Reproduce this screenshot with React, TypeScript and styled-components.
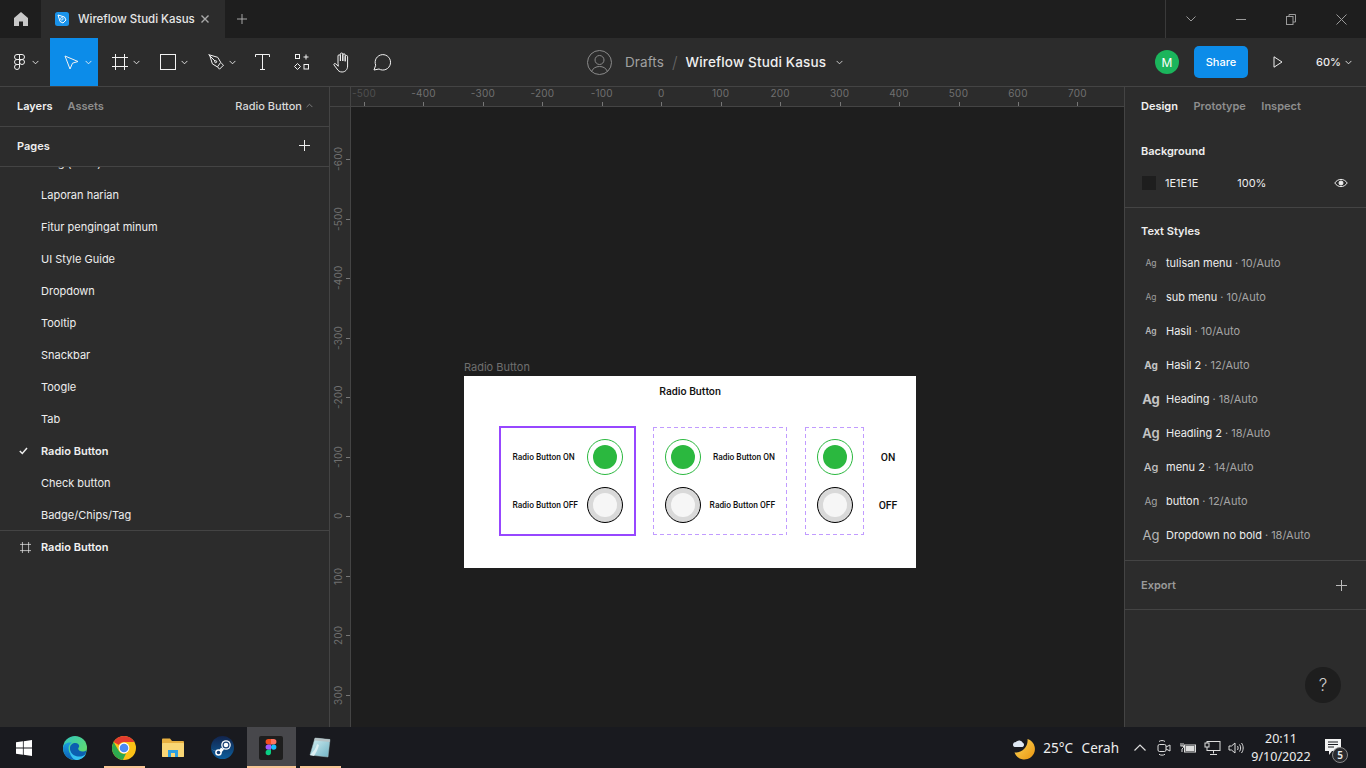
import React from "react";
import styled, { createGlobalStyle } from "styled-components";

const Global = createGlobalStyle`
  html, body { margin: 0; padding: 0; width: 100%; height: 100%; overflow: hidden; background: #1e1e1e; }
  #root { width: 1366px; height: 768px; }
  * { box-sizing: border-box; }
  body { font-family: Inter, "Liberation Sans", sans-serif; font-size: 11px; color: #fff; }
`;

const Page = styled.div`
  width: 1366px; height: 768px; display: flex; flex-direction: column; overflow: hidden;
`;

/* ---------- tab bar ---------- */
const TabBar = styled.header`
  height: 38px; flex: none; display: flex; align-items: stretch; background: #1e1e1e;
`;
const HomeTab = styled.div`
  width: 41px; display: flex; align-items: center; justify-content: center; color: #c8c8c8;
`;
const FileTab = styled.div`
  width: 184px; background: #2c2c2c; display: flex; align-items: center; padding-left: 14px; gap: 9px;
`;
const TabTitle = styled.span`
  font-size: 11.5px; font-weight: 500; color: #e6e6e6; white-space: nowrap; width: 114px; letter-spacing: -.02px;
`;
const NewTab = styled.div`
  width: 34px; display: flex; align-items: center; justify-content: center; color: #b3b3b3;
`;
const Spacer = styled.div`flex: 1;`;
const WindowControls = styled.div`
  width: 201px; border-left: 1px solid #3a3a3a; display: flex; color: #9a9a9a;
`;
const WindowButton = styled.div`
  width: 50px; display: flex; align-items: center; justify-content: center;
`;

/* ---------- toolbar ---------- */
const Toolbar = styled.div`
  height: 49px; flex: none; display: flex; align-items: stretch; background: #2c2c2c;
  border-bottom: 1px solid #444;
`;
const ToolGroup = styled.div<{ $w: number; $active?: boolean }>`
  width: ${p => p.$w}px; display: flex; align-items: center; justify-content: space-between; padding: 0 6px 0 14px;
  background: ${p => (p.$active ? "#0c8ce9" : "transparent")}; color: #f2f2f2;
`;
const MainMenu = styled(ToolGroup)`
  padding-right: 11px;
`;
const SingleTool = styled.div`
  width: 40px; display: flex; align-items: center; justify-content: center; color: #f2f2f2;
`;
const Breadcrumb = styled.div`
  margin-left: 185px; display: flex; align-items: center; font-size: 13.5px; white-space: nowrap;
`;
const Drafts = styled.span`color: #a0a0a0; margin-left: 13px; letter-spacing: .1px;`;
const Slash = styled.span`color: #666; margin: 0 8px 0 8px; font-weight: 300; font-size: 16px;`;
const FileName = styled.span`color: #f0f0f0; font-weight: 500; margin-right: 10px; letter-spacing: .16px;`;
const ToolbarRight = styled.div`
  margin-left: auto; display: flex; align-items: center;
`;
const Avatar = styled.div`
  width: 24px; height: 24px; border-radius: 50%; background: #1bb55c; color: #fff; font-size: 12px;
  display: flex; align-items: center; justify-content: center; margin-right: 15px;
`;
const ShareButton = styled.div`
  width: 54px; height: 32px; border-radius: 5px; background: #0c8ce9; color: #fff; font-size: 11px; font-weight: 500;
  display: flex; align-items: center; justify-content: center;
`;
const PlayBox = styled.div`
  width: 60px; display: flex; align-items: center; justify-content: center; color: #eee;
`;
const Zoom = styled.div`
  width: 58px; padding-left: 8px; display: flex; align-items: center; gap: 4px; font-size: 11px; font-weight: 500; color: #eee;
`;

/* ---------- main ---------- */
const Main = styled.div`
  flex: 1; min-height: 0; display: flex; background: #1e1e1e;
`;
const LeftPanel = styled.aside`
  width: 330px; flex: none; background: #2c2c2c; border-right: 1px solid #444; display: flex; flex-direction: column;
`;
const PanelTabs = styled.div`
  height: 40px; flex: none; display: flex; align-items: center; padding: 0 16px 2px 17px; gap: 15px;
  border-bottom: 1px solid #444; font-size: 11px; font-weight: 600; color: #8e8e8e;
`;
const PanelTab = styled.span<{ $on?: boolean }>`
  color: ${p => (p.$on ? "#f0f0f0" : "#8e8e8e")};
  font-weight: 600;
`;
const PageSwitch = styled.span`
  margin-left: auto; display: flex; align-items: center; gap: 4px; color: #d8d8d8; font-weight: 500;
`;
const PagesHeader = styled.div`
  height: 40px; flex: none; display: flex; align-items: center; justify-content: space-between; padding: 0 19px 2px 17px;
  border-bottom: 1px solid #444; font-weight: 600; color: #eee;
`;
const PageList = styled.div`
  height: 364px; flex: none; overflow: hidden; border-bottom: 1px solid #444;
`;
const PageRow = styled.div<{ $first?: boolean; $on?: boolean }>`
  height: 32px; display: flex; align-items: center; position: relative; padding-left: 41px;
  margin-top: ${p => (p.$first ? "-20px" : "0")};
  color: #eee; font-weight: ${p => (p.$on ? 600 : 400)}; white-space: nowrap;
`;
const Check = styled.span`
  position: absolute; left: 19px; top: 12px; color: #eee; display: flex;
`;
const LayerRow = styled.div`
  height: 32px; flex: none; display: flex; align-items: center; gap: 10px; padding-left: 20px;
  font-weight: 600; color: #f2f2f2;
`;

const Stage = styled.div`
  flex: 1; min-width: 0; display: grid; grid-template-columns: 21px 1fr; grid-template-rows: 20px 1fr;
`;
const RulerCorner = styled.div`
  background: #2c2c2c; border-right: 1px solid #444; border-bottom: 1px solid #444;
`;
const RulerX = styled.div`
  position: relative; background: #2c2c2c; border-bottom: 1px solid #444; overflow: hidden;
`;
const RulerY = styled.div`
  position: relative; background: #2c2c2c; border-right: 1px solid #444; overflow: hidden;
`;
const MarkX = styled.div<{ $faint?: boolean }>`
  position: absolute; top: 0; width: 60px; margin-left: -30px; height: 19px; text-align: center;
  font-size: 10px; line-height: 12px; letter-spacing: .2px; color: ${p => (p.$faint ? "#4f4f4f" : "#707070")};
  &::after { content: ""; position: absolute; left: 30px; bottom: 0; width: 1px; height: 4px; background: #777; }
`;
const MarkY = styled.div`
  position: absolute; left: 0; width: 20px; height: 40px; margin-top: -20px;
  &::after { content: ""; position: absolute; right: 0; top: 20px; width: 4px; height: 1px; background: #777; }
`;
const MarkYText = styled.span`
  position: absolute; left: 1px; top: 0; width: 14px; height: 40px; writing-mode: vertical-rl; transform: rotate(180deg);
  text-align: center; font-size: 10px; line-height: 14px; letter-spacing: .2px; color: #707070;
`;
const Canvas = styled.div`
  position: relative; background: #1e1e1e; overflow: hidden;
`;
const FrameLabel = styled.div`
  position: absolute; left: 113px; top: 253px; font-size: 11px; color: #6f6f6f; white-space: nowrap;
`;
const Frame = styled.div`
  position: absolute; left: 113px; top: 269px; width: 452px; height: 192px; background: #fff;
  font-family: Roboto, Inter, sans-serif; color: #111; display: flex; flex-direction: column;
`;
const FrameTitle = styled.div`
  height: 50px; flex: none; padding-top: 9px; text-align: center; font-size: 10.7px; font-weight: 500; line-height: 13px;
`;
const Groups = styled.div`
  display: flex; align-items: flex-start; padding-left: 35px;
`;
const dashX = "repeating-linear-gradient(90deg, #c19bff 0 4px, transparent 4px 7px)";
const dashY = "repeating-linear-gradient(180deg, #c19bff 0 4px, transparent 4px 7px)";
const Group = styled.div<{ $kind: "solid" | "dash"; $w: number; $gap?: number }>`
  width: ${p => p.$w}px; flex: none; display: flex; flex-direction: column; gap: 12px;
  margin-left: ${p => p.$gap ?? 0}px;
  ${p => p.$kind === "solid"
    ? "height: 110px; border: 2.5px solid #9747ff; padding: 11px 11px 0 11.5px;"
    : `height: 108px; margin-top: 1px; padding: 12px 12px 0 12px;
       background: ${dashX} top/100% 1px no-repeat, ${dashX} bottom/100% 1px no-repeat,
                   ${dashY} left/1px 100% no-repeat, ${dashY} right/1px 100% no-repeat;`}
`;
const OptionRow = styled.div`
  height: 36px; display: flex; align-items: center; justify-content: space-between;
  font-size: 8.4px; font-weight: 500; white-space: nowrap;
`;
const Radio = styled.div<{ $on?: boolean }>`
  width: 36px; height: 36px; border-radius: 50%; flex: none; display: flex; align-items: center; justify-content: center;
  border: ${p => (p.$on ? "1px solid #2bb83f" : "1.4px solid #000")};
  background: ${p => (p.$on ? "#fff" : "#d9d9d9")};
  &::after {
    content: ""; width: 24px; height: 24px; border-radius: 50%;
    background: ${p => (p.$on ? "#2bb83f" : "#f6f6f6")};
  }
`;
const ShortLabels = styled.div`
  width: 20px; margin-left: 14px; margin-top: 13px; display: flex; flex-direction: column; gap: 12px; align-items: center;
`;
const ShortLabel = styled.div`
  height: 36px; display: flex; align-items: center; font-size: 10.4px; font-weight: 500;
`;

const RightPanel = styled.aside`
  width: 242px; flex: none; background: #2c2c2c; border-left: 1px solid #444; display: flex; flex-direction: column; position: relative;
`;
const DesignTabs = styled.div`
  height: 40px; flex: none; display: flex; align-items: center; padding: 0 0 2px 16px; gap: 15.500px;
`;
const Section = styled.section<{ $h: number; $line?: boolean }>`
  height: ${p => p.$h}px; flex: none; padding: 0 16px; ${p => (p.$line ? "border-bottom: 1px solid #444;" : "")}
`;
const SectionHead = styled.div<{ $h?: number }>`
  height: ${p => p.$h ?? 48}px; display: flex; align-items: center; justify-content: space-between; font-weight: 600; color: #eee;
`;
const BgRow = styled.div`
  height: 16px; display: flex; align-items: center; margin-top: 0; color: #eee;
`;
const Swatch = styled.div`
  width: 14px; height: 14px; background: #1e1e1e; margin-left: 1px; margin-right: 9px; flex: none;
`;
const BgPct = styled.span`margin-left: 39px;`;
const EyeWrap = styled.span`margin-left: auto; margin-right: 2px; display: flex; color: #eee;`;
const StyleList = styled.div`
  margin-top: -8px; display: flex; flex-direction: column;
`;
const StyleRow = styled.div`
  height: 34px; display: flex; align-items: center; white-space: nowrap; color: #eee;
`;
const AgBox = styled.span<{ $s: number; $w: number; $c: string }>`
  width: 20px; margin-right: 5px; margin-top: -1px; flex: none; text-align: center; font-size: ${p => p.$s}px; font-weight: ${p => p.$w}; color: ${p => p.$c};
`;
const Meta = styled.span`color: #a5a5a5; margin-left: 3px;`;
const ExportHead = styled.div`
  height: 48px; display: flex; align-items: center; justify-content: space-between; font-weight: 600; color: #9a9a9a; padding-right: 3px;
`;
const HelpButton = styled.div`
  position: absolute; right: 25px; bottom: 24px; width: 36px; height: 36px; border-radius: 50%; background: #1e1e1e; color: #ccc;
  font-size: 17px; font-weight: 300; display: flex; align-items: center; justify-content: center;
`;

/* ---------- taskbar ---------- */
const Taskbar = styled.footer`
  height: 41px; flex: none; display: flex; align-items: stretch; background: #191a1f;
  font-family: "Noto Sans", "Open Sans", sans-serif; color: #e8e8e8;
`;
const StartButton = styled.div`
  width: 48px; display: flex; align-items: center; justify-content: center; margin-right: 2.500px; color: #fff;
`;
const AppSlot = styled.div<{ $open?: boolean; $active?: boolean }>`
  width: 49px; flex: none; position: relative; display: flex; align-items: center; justify-content: center;
  background: ${p => (p.$active ? "#47474b" : "transparent")};
  ${p => p.$open ? `&::after { content: ""; position: absolute; bottom: 0; height: 2px; left: ${p.$active ? 0 : 4}px; right: ${p.$active ? 0 : 4}px; background: #f7c594; }` : ""}
`;
const Tray = styled.div`
  margin-left: auto; display: flex; align-items: center; color: #eee;
`;
const Weather = styled.span`
  font-size: 13.5px; margin-left: 7px; margin-right: 9px; word-spacing: 5px; white-space: nowrap;
`;
const TrayIcon = styled.span`
  width: 24px; display: flex; align-items: center; justify-content: center;
`;
const Clock = styled.div`
  width: 62px; margin-left: 2px; text-align: center; font-size: 12.500px; line-height: 18px; white-space: nowrap;
`;
const Notif = styled.div`
  position: relative; width: 28px; margin-left: 7px; margin-right: 14px; height: 100%; display: flex; align-items: center; justify-content: center;
`;
const NotifBadge = styled.span`
  position: absolute; left: 13px; top: 20px; width: 16px; height: 16px; border-radius: 50%; background: #2a2a2e; border: 1px solid #888;
  font-size: 10px; font-weight: 600; line-height: 14px; text-align: center; color: #eee;
`;
const TaskEnd = styled.div`width: 1px; margin: 3px 4px 0 0; background: #555;`;

/* ---------- icons ---------- */
const Chev = ({ up = false, c = "currentColor" }: { up?: boolean; c?: string }) => (
  <svg width="7" height="5" viewBox="0 0 8 5" fill="none" stroke={c} strokeWidth="1" style={up ? { transform: "rotate(180deg)" } : undefined}><path d="M.7.7 4 4 7.3.7" /></svg>
);
const Plus = ({ s = 11, c = "currentColor" }: { s?: number; c?: string }) => (
  <svg width={s} height={s} viewBox="0 0 11 11" stroke={c} strokeWidth="1"><path d="M5.5 0v11M0 5.5h11" /></svg>
);
const FigmaMark = () => (
  <svg width="11" height="16" viewBox="0 0 11 16" fill="none" stroke="currentColor" strokeWidth="1">
    <path d="M5.5.5H3a2.5 2.5 0 0 0 0 5h2.5zM5.5.5H8a2.5 2.5 0 0 1 0 5H5.5zM5.5 5.5H3a2.5 2.5 0 0 0 0 5h2.5zM5.5 10.5H3a2.5 2.5 0 1 0 2.5 2.5z" />
    <circle cx="8" cy="8" r="2.5" />
  </svg>
);
const MoveIcon = () => (
  <svg width="15" height="15" viewBox="0 0 15 15" fill="none" stroke="currentColor" strokeWidth="1"><path d="M1 1l13 5.5-5.5 1.7L6 14z" /></svg>
);
const HashIcon = ({ s = 16 }: { s?: number }) => (
  <svg width={s} height={s} viewBox="0 0 16 16" fill="none" stroke="currentColor" strokeWidth="1"><path d="M3.5 0v16M12.500 0v16M0 3.5h16M0 12.500h16" /></svg>
);
const RectIcon = () => (
  <svg width="16" height="16" viewBox="0 0 16 16" fill="none" stroke="currentColor" strokeWidth="1"><rect x=".5" y=".5" width="15" height="15" /></svg>
);
const PenIcon = () => (
  <svg width="16" height="16" viewBox="0 0 16 16" fill="none" stroke="currentColor" strokeWidth="1"><path d="M.7.7l9 2.6 3 5-3.3 4.6-5-3L1.8 1.7zM1 1l6 6" /><circle cx="7.7" cy="7.7" r="1" /><path d="M9.7 13l1.8 2.2 4-4-2.3-2.2" /></svg>
);
const TextIcon = () => (
  <svg width="15" height="16" viewBox="0 0 15 16" fill="none" stroke="currentColor" strokeWidth="1"><path d="M.5 3V.5h14V3M7.5.5v15M5 15.5h5" /></svg>
);
const CompIcon = () => (
  <svg width="16" height="16" viewBox="0 0 16 16" fill="none" stroke="currentColor" strokeWidth="1"><rect x="1.5" y=".5" width="4" height="4" /><path d="M12 .5v5M9.5 3h5" /><path d="M3.5 9.5 6.5 12.500 3.5 15.500.5 12.500z" /><rect x="10" y="10.500" width="4.500" height="4.500" /></svg>
);
const HandIcon = () => (
  <svg width="18" height="21" viewBox="0 0 18 21" fill="none" stroke="currentColor" strokeWidth="1" strokeLinejoin="round" strokeLinecap="round"><path d="M5 11V4a1.2 1.2 0 0 1 2.4 0V9 2.2a1.2 1.2 0 0 1 2.4 0V9 3a1.2 1.2 0 0 1 2.4 0v6.3-4.6a1.2 1.2 0 0 1 2.4 0V14c0 3.5-2.3 6-5.500 6-2.600 0-3.900-1.200-5-3L1 13c-.6-1 .8-2 1.600-1.200L5 14z" /></svg>
);
const CommentIcon = () => (
  <svg width="18" height="18" viewBox="0 0 18 18" fill="none" stroke="currentColor" strokeWidth="1"><path d="M1 17l1.700-4.800A7.700 7.700 0 1 1 6 16z" /></svg>
);
const PersonCircle = () => (
  <svg width="25" height="25" viewBox="0 0 25 25" fill="none" stroke="#8a8a8a" strokeWidth="1"><circle cx="12.500" cy="12.500" r="12" /><circle cx="12.500" cy="10" r="4.500" /><path d="M4.500 21.500c1.500-3.500 4.500-5 8-5s6.500 1.500 8 5" /></svg>
);
const Eye = () => (
  <svg width="14" height="10" viewBox="0 0 14 10" fill="none" stroke="currentColor" strokeWidth="1"><path d="M.8 5C3.800.2 10.200.2 13.200 5 10.200 9.800 3.800 9.800.8 5z" /><circle cx="7" cy="5" r="2" fill="currentColor" /></svg>
);
const WinLogo = () => (
  <svg width="16" height="16" viewBox="0 0 16 16" fill="currentColor"><path d="M0 2.300 6.900 1.300V7.600H0zM7.700 1.200 16 0V7.600H7.700zM0 8.400H6.900V14.700L0 13.700zM7.700 8.400H16V16L7.700 14.800z" /></svg>
);
const EdgeLogo = () => (
  <svg width="24" height="24" viewBox="0 0 24 24">
    <defs>
      <linearGradient id="edgeA" x1="0" y1="0" x2="1" y2="1"><stop offset="0" stopColor="#2fc6c0" /><stop offset="1" stopColor="#6ee05a" /></linearGradient>
      <linearGradient id="edgeB" x1="0" y1="0" x2="0" y2="1"><stop offset="0" stopColor="#1a9de0" /><stop offset="1" stopColor="#0b5fb5" /></linearGradient>
    </defs>
    <circle cx="12" cy="12" r="12" fill="url(#edgeA)" />
    <path d="M0 12C.5 7 5 6 9 6.500 6 8 5 11 5.800 14.500 6.800 19 11 22 16 21.200 14 23 12 24 12 24 5 24 0 19 0 12z" fill="url(#edgeB)" />
    <path d="M7 12C7 9 9.500 7 12.500 7c2.200 0 3.700 1.500 3.700 3 0 1.300-1 1.700-1 2.800 0 1.600 2 2.700 4.300 2.700 1.500 0 3.300-.5 4-1.500C23 20 18 24 12 24c-3 0-5-6-5-12z" fill="#0c5fb0" />
    <path d="M13 24c-4-1-6.500-5.500-6-10 1 3.500 4 6 8 6.500 3 .4 6.500-.7 8.300-3.300C21.500 21.500 17.500 24 13 24z" fill="#35c1f1" />
  </svg>
);
const ChromeLogo = () => (
  <svg width="24" height="24" viewBox="0 0 24 24">
    <circle cx="12" cy="12" r="12" fill="#fbc116" />
    <path d="M12 0a12 12 0 0 1 10.400 6H12a6 6 0 0 0-5.200 3L1.600 6A12 12 0 0 1 12 0z" fill="#e33b2e" />
    <path d="M1.600 6 6.800 15a6 6 0 0 0 7.200 2.600L10.900 24A12 12 0 0 1 1.600 6z" fill="#2da94f" />
    <circle cx="12" cy="12" r="5.400" fill="#fff" />
    <circle cx="12" cy="12" r="4.300" fill="#4a8af4" />
  </svg>
);
const FolderLogo = () => (
  <svg width="22" height="20" viewBox="0 0 22 20">
    <path d="M0 1.500C0 1 .4.500 1 .500h7l2 2.500h11a1 1 0 0 1 1 1V18a1 1 0 0 1-1 1H1a1 1 0 0 1-1-1z" fill="#e8b040" />
    <rect x="0" y="5" width="22" height="14" rx="1" fill="#f9d675" />
    <path d="M6 12h10v7h-3v-4H9v4H6z" fill="#2d9fe0" />
  </svg>
);
const SteamLogo = () => (
  <svg width="23" height="23" viewBox="0 0 23 23">
    <defs><linearGradient id="steamG" x1="0" y1="0" x2="0" y2="1"><stop offset="0" stopColor="#12244d" /><stop offset="1" stopColor="#0c5e9c" /></linearGradient></defs>
    <circle cx="11.500" cy="11.500" r="11.500" fill="url(#steamG)" />
    <path d="M.2 13.200 7 16 10 11.500 13 13.500 9.500 17.500z" fill="#fff" />
    <circle cx="7.500" cy="16.500" r="3.300" fill="#fff" />
    <circle cx="7.500" cy="16.500" r="1.800" fill="#173f73" />
    <circle cx="15" cy="9" r="4.800" fill="#fff" />
    <circle cx="15" cy="9" r="3.500" fill="#173f73" />
    <circle cx="15" cy="9" r="2.300" fill="#fff" />
  </svg>
);
const FigmaApp = () => (
  <svg width="24" height="24" viewBox="0 0 24 24">
    <rect width="24" height="24" rx="2" fill="#1e1e1e" />
    <path d="M12 3H9.300a2.700 2.700 0 0 0 0 5.400H12z" fill="#f24e1e" />
    <path d="M12 3h2.700a2.700 2.700 0 0 1 0 5.400H12z" fill="#ff7262" />
    <path d="M12 8.400H9.300a2.700 2.700 0 0 0 0 5.400H12z" fill="#a259ff" />
    <circle cx="14.700" cy="11.100" r="2.700" fill="#1abcfe" />
    <path d="M12 13.800H9.300A2.700 2.700 0 1 0 12 16.500z" fill="#0acf83" />
  </svg>
);
const NoteLogo = () => (
  <svg width="24" height="24" viewBox="0 0 24 24">
    <defs><linearGradient id="noteG" x1="0" y1="0" x2="1" y2="1"><stop offset="0" stopColor="#d6f0f4" /><stop offset="1" stopColor="#6fb3c4" /></linearGradient></defs>
    <path d="M7 2 22 3.500 20 21 2 19z" fill="url(#noteG)" stroke="#9fb8bd" strokeWidth=".5" />
    <path d="M7 2 22 3.500 21.700 6 6.300 4.500z" fill="#b7c3c6" />
    <path d="M2 19c2-2 6-6 7-11l2 1c-1 4-3 8-5 11z" fill="#eaf6f8" opacity=".8" />
  </svg>
);
const MoonLogo = () => (
  <svg width="24" height="24" viewBox="0 0 24 24">
    <defs><linearGradient id="moonG" x1="0" y1="0" x2="1" y2="1"><stop offset="0" stopColor="#ffd85a" /><stop offset="1" stopColor="#e9950f" /></linearGradient></defs>
    <path d="M15.500 3a10.500 10.500 0 1 1-13 13.500C9.500 17.500 16.500 11 15.500 3z" fill="url(#moonG)" />
    <path d="M1 9a3 3 0 0 1 3-3 4 4 0 0 1 6.800.8A2.300 2.300 0 0 1 10.500 11H2.500A2 2 0 0 1 1 9z" fill="#dfe8f3" />
  </svg>
);
const TrayMeet = () => (
  <svg width="16" height="17" viewBox="0 0 16 17" fill="none" stroke="#ddd" strokeWidth="1"><rect x="2" y="5.500" width="8" height="7" rx="1.500" /><path d="M10 8l4-2v6l-4-2M3 2.500c1.500-1.300 4.500-1.300 6 0M3 15.200c1.500 1.300 4.500 1.300 6 0" /></svg>
);
const TrayBattery = () => (
  <svg width="17" height="12" viewBox="0 0 17 12" fill="none" stroke="#ddd" strokeWidth="1"><rect x="4.500" y="3" width="11" height="7" /><rect x="6" y="4.500" width="8" height="4" fill="#ddd" /><path d="M1 1v3M3 1v3M.5 4h3v1.500L2 7v3" /></svg>
);
const TrayNet = () => (
  <svg width="17" height="16" viewBox="0 0 17 16" fill="none" stroke="#ddd" strokeWidth="1"><rect x="3" y="1.500" width="13" height="9" /><path d="M9.500 10.500v3M6 14.500h7" /><rect x="1" y="3" width="4" height="4" fill="#191a1f" /></svg>
);
const TraySound = () => (
  <svg width="17" height="14" viewBox="0 0 17 14" fill="none" stroke="#ddd" strokeWidth="1"><path d="M1 5h2.500L7 2v10L3.500 9H1zM9.500 5c.8 1.200.8 2.800 0 4M11.500 3.500c1.500 2 1.500 5 0 7M13.500 2c2.200 3 2.200 7 0 10" /></svg>
);
const NotifIcon = () => (
  <svg width="16" height="17" viewBox="0 0 16 17" fill="#f2f2f2"><path d="M0 0h16v12H7l-3 4v-4H0z" /><path d="M3 3h10M3 5.500h10M3 8h6" stroke="#191a1f" strokeWidth="1" /></svg>
);

const pages = ["Laporan harian", "Fitur pengingat minum", "UI Style Guide", "Dropdown", "Tooltip", "Snackbar", "Toogle", "Tab", "Radio Button", "Check button", "Badge/Chips/Tag"];
const xMarks = [-500, -400, -300, -200, -100, 0, 100, 200, 300, 400, 500, 600, 700];
const yMarks = [-600, -500, -400, -300, -200, -100, 0, 100, 200, 300];
const styleRows: { n: string; m: string; s: number; w: number; c: string }[] = [
  { n: "tulisan menu", m: "10/Auto", s: 8.5, w: 500, c: "#9a9a9a" },
  { n: "sub menu", m: "10/Auto", s: 8.5, w: 400, c: "#9a9a9a" },
  { n: "Hasil", m: "10/Auto", s: 8.5, w: 600, c: "#b5b5b5" },
  { n: "Hasil 2", m: "12/Auto", s: 10, w: 700, c: "#c4c4c4" },
  { n: "Heading", m: "18/Auto", s: 13, w: 700, c: "#c4c4c4" },
  { n: "Headling 2", m: "18/Auto", s: 13, w: 600, c: "#c4c4c4" },
  { n: "menu 2", m: "14/Auto", s: 11, w: 500, c: "#c4c4c4" },
  { n: "button", m: "12/Auto", s: 10, w: 400, c: "#a5a5a5" },
  { n: "Dropdown no bold", m: "18/Auto", s: 13, w: 400, c: "#b5b5b5" },
];

export default function App() {
  return (
    <Page>
      <Global />
      <TabBar>
        <HomeTab>
          <svg width="14" height="14" viewBox="0 0 14 14" fill="currentColor"><path d="M7 0 14 6v8H9V9.500H5V14H0V6z" /></svg>
        </HomeTab>
        <FileTab>
          <svg width="14" height="14" viewBox="0 0 14 14">
            <rect width="14" height="14" rx="2.500" fill="#1a93ea" />
            <path d="M3 3l6.500 2L11 8l-3 3-3-1.500z" fill="none" stroke="#fff" strokeWidth="1" />
            <circle cx="6.800" cy="6.800" r="1.300" fill="none" stroke="#fff" strokeWidth=".8" />
          </svg>
          <TabTitle>Wireflow Studi Kasus</TabTitle>
          <svg width="8" height="8" viewBox="0 0 8 8" stroke="#aaa" strokeWidth="1.400"><path d="M.5.500l7 7M7.500.500l-7 7" /></svg>
        </FileTab>
        <NewTab><Plus s={10} c="#b5b5b5" /></NewTab>
        <Spacer />
        <WindowControls>
          <WindowButton><svg width="10" height="6" viewBox="0 0 10 6" fill="none" stroke="currentColor"><path d="M.5.500 5 5 9.500.500" /></svg></WindowButton>
          <WindowButton><svg width="10" height="1" viewBox="0 0 10 1" stroke="currentColor"><path d="M0 .5h10" /></svg></WindowButton>
          <WindowButton><svg width="10" height="11" viewBox="0 0 10 11" fill="none" stroke="currentColor"><rect x=".5" y="2.500" width="6.500" height="8" /><path d="M3 2.500V.5h6.500v7.500H7" /></svg></WindowButton>
          <WindowButton><svg width="11" height="11" viewBox="0 0 11 11" stroke="currentColor"><path d="M.5.500l10 10M10.500.500l-10 10" /></svg></WindowButton>
        </WindowControls>
      </TabBar>

      <Toolbar>
        <MainMenu $w={50}><FigmaMark /><Chev /></MainMenu>
        <ToolGroup $w={48} $active><MoveIcon /><Chev /></ToolGroup>
        <ToolGroup $w={48}><HashIcon /><Chev /></ToolGroup>
        <ToolGroup $w={48}><RectIcon /><Chev /></ToolGroup>
        <ToolGroup $w={48}><PenIcon /><Chev /></ToolGroup>
        <SingleTool><TextIcon /></SingleTool>
        <SingleTool><CompIcon /></SingleTool>
        <SingleTool><HandIcon /></SingleTool>
        <SingleTool><CommentIcon /></SingleTool>
        <Breadcrumb>
          <PersonCircle />
          <Drafts>Drafts</Drafts>
          <Slash>/</Slash>
          <FileName>Wireflow Studi Kasus</FileName>
          <Chev c="#ddd" />
        </Breadcrumb>
        <ToolbarRight>
          <Avatar>M</Avatar>
          <ShareButton>Share</ShareButton>
          <PlayBox>
            <svg width="10" height="12" viewBox="0 0 10 12" fill="none" stroke="currentColor"><path d="M1 .8 9 6 1 11.200z" /></svg>
          </PlayBox>
          <Zoom>60%<Chev /></Zoom>
        </ToolbarRight>
      </Toolbar>

      <Main>
        <LeftPanel>
          <PanelTabs>
            <PanelTab $on>Layers</PanelTab>
            <PanelTab>Assets</PanelTab>
            <PageSwitch>Radio Button <Chev up c="#888" /></PageSwitch>
          </PanelTabs>
          <PagesHeader>Pages <Plus c="#eee" /></PagesHeader>
          <PageList>
            <PageRow $first>Diag (fixed)</PageRow>
            {pages.map(p => (
              <PageRow key={p} $on={p === "Radio Button"}>
                {p === "Radio Button" && (
                  <Check><svg width="9" height="8" viewBox="0 0 9 8" fill="none" stroke="currentColor" strokeWidth="1.500"><path d="M.8 4 3.300 6.500 8 1" /></svg></Check>
                )}
                {p}
              </PageRow>
            ))}
          </PageList>
          <LayerRow><HashIcon s={11} />Radio Button</LayerRow>
        </LeftPanel>

        <Stage>
          <RulerCorner />
          <RulerX>
            {xMarks.map(v => (
              <MarkX key={v} $faint={v === -500} style={{ left: 13 + (v + 500) * 0.5945 }}>{v}</MarkX>
            ))}
          </RulerX>
          <RulerY>
            {yMarks.map(v => (
              <MarkY key={v} style={{ top: 52 + (v + 600) * 0.595 }}><MarkYText>{v}</MarkYText></MarkY>
            ))}
          </RulerY>
          <Canvas>
            <FrameLabel>Radio Button</FrameLabel>
            <Frame>
              <FrameTitle>Radio Button</FrameTitle>
              <Groups>
                <Group $kind="solid" $w={137}>
                  <OptionRow>Radio Button ON<Radio $on /></OptionRow>
                  <OptionRow>Radio Button OFF<Radio /></OptionRow>
                </Group>
                <Group $kind="dash" $w={134} $gap={17}>
                  <OptionRow><Radio $on />Radio Button ON</OptionRow>
                  <OptionRow><Radio />Radio Button OFF</OptionRow>
                </Group>
                <Group $kind="dash" $w={59} $gap={18}>
                  <OptionRow><Radio $on /></OptionRow>
                  <OptionRow><Radio /></OptionRow>
                </Group>
                <ShortLabels>
                  <ShortLabel>ON</ShortLabel>
                  <ShortLabel>OFF</ShortLabel>
                </ShortLabels>
              </Groups>
            </Frame>
          </Canvas>
        </Stage>

        <RightPanel>
          <DesignTabs>
            <PanelTab $on>Design</PanelTab>
            <PanelTab>Prototype</PanelTab>
            <PanelTab>Inspect</PanelTab>
          </DesignTabs>
          <Section $h={81} $line>
            <SectionHead>Background</SectionHead>
            <BgRow>
              <Swatch />
              1E1E1E
              <BgPct>100%</BgPct>
              <EyeWrap><Eye /></EyeWrap>
            </BgRow>
          </Section>
          <Section $h={353} $line>
            <SectionHead $h={46}>Text Styles</SectionHead>
            <StyleList>
              {styleRows.map(r => (
                <StyleRow key={r.n}>
                  <AgBox $s={r.s} $w={r.w} $c={r.c}>Ag</AgBox>
                  {r.n}<Meta>· {r.m}</Meta>
                </StyleRow>
              ))}
            </StyleList>
          </Section>
          <Section $h={49} $line>
            <ExportHead>Export <Plus c="#bbb" /></ExportHead>
          </Section>
          <HelpButton>?</HelpButton>
        </RightPanel>
      </Main>

      <Taskbar>
        <StartButton><WinLogo /></StartButton>
        <AppSlot><EdgeLogo /></AppSlot>
        <AppSlot $open><ChromeLogo /></AppSlot>
        <AppSlot><FolderLogo /></AppSlot>
        <AppSlot><SteamLogo /></AppSlot>
        <AppSlot $open $active><FigmaApp /></AppSlot>
        <AppSlot $open><NoteLogo /></AppSlot>
        <Tray>
          <MoonLogo />
          <Weather>25°C Cerah</Weather>
          <TrayIcon><svg width="12" height="7" viewBox="0 0 12 7" fill="none" stroke="#ddd" strokeWidth="1.200"><path d="M.5 6.500 6 1l5.500 5.500" /></svg></TrayIcon>
          <TrayIcon><TrayMeet /></TrayIcon>
          <TrayIcon><TrayBattery /></TrayIcon>
          <TrayIcon><TrayNet /></TrayIcon>
          <TrayIcon><TraySound /></TrayIcon>
          <Clock>20:11<br />9/10/2022</Clock>
          <Notif><NotifIcon /><NotifBadge>5</NotifBadge></Notif>
          <TaskEnd />
        </Tray>
      </Taskbar>
    </Page>
  );
}
